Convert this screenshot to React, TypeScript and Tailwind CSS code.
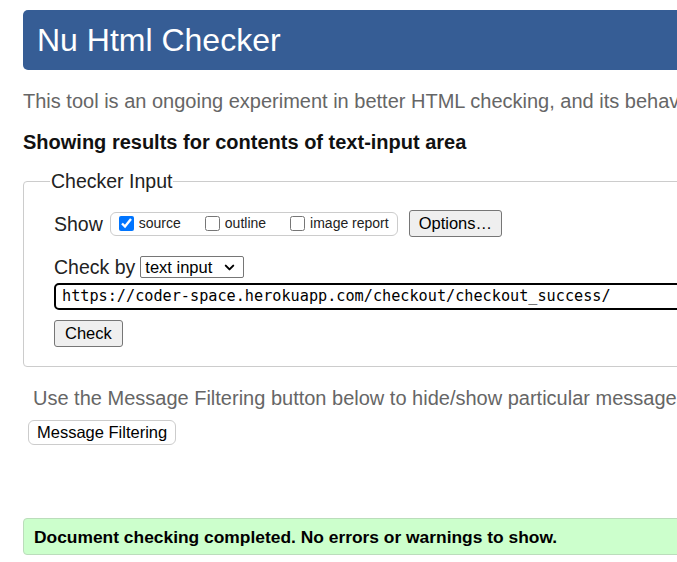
import { ChevronDown } from "lucide-react";

const sans = "font-['Liberation_Sans',Arial,sans-serif]";

export default function App() {
  return (
    <div className={`w-[677px] h-[562px] overflow-hidden bg-white ${sans}`}>
      <div className="w-[1000px] pl-[23px] pt-[10px]">
        {/* title bar */}
        <header className="h-[60px] rounded-[5px] bg-[#365d95] pl-[14px] flex items-center">
          <h1 className="text-[32px] leading-none text-white">Nu Html Checker</h1>
        </header>

        <p className="mt-[20px] text-[20px] leading-[22px] text-[#666] whitespace-nowrap">
          This tool is an ongoing experiment in better HTML checking, and its behavior remains subject to change
        </p>
        <p className="mt-[19px] text-[20px] leading-[22px] font-bold text-[#111]">
          Showing results for contents of text-input area
        </p>

        <fieldset className="mt-[16px] w-[900px] rounded-[4px] border border-[#ccc] pl-[30px] pb-[19px]">
          <legend className="ml-[-4px] px-[1px] text-[19.5px] leading-[24px] text-[#222]">Checker Input</legend>

          <div className="mt-[17px] flex items-center">
            <span className="text-[19.5px] leading-[24px] text-[#222]">Show</span>
            <div className="ml-[7px] flex h-[24px] items-center rounded-[6px] border border-[#ccc] pl-[8px] pr-[8px] text-[14px] text-[#222]">
              <Check label="source" checked />
              <Check label="outline" className="ml-[24px]" />
              <Check label="image report" className="ml-[24px]" />
            </div>
            <button className="ml-[11px] h-[27px] rounded-[3px] border border-[#767676] bg-[#efefef] px-[9px] text-[16.5px] leading-none text-black">
              Options…
            </button>
          </div>

          <div className="mt-[18px] flex items-center">
            <span className="text-[19.5px] leading-[24px] text-[#222]">Check by</span>
            <div className="ml-[5px] flex h-[22px] w-[104px] items-center justify-between rounded-[2px] border border-[#767676] pl-[4px] pr-[6px] text-[16.5px] text-black">
              <span>text input</span>
              <ChevronDown size={15} strokeWidth={3.2} />
            </div>
          </div>

          <div className="mt-[4px] flex h-[27px] items-center rounded-[5px] border-2 border-black pl-[6px] font-['DejaVu_Sans_Mono',monospace] text-[15.2px] text-black">
            https://coder-space.herokuapp.com/checkout/checkout_success/
          </div>

          <button className="mt-[10px] h-[27px] rounded-[3px] border border-[#767676] bg-[#efefef] px-[10px] text-[16.5px] leading-none text-black">
            Check
          </button>
        </fieldset>

        <p className="mt-[20px] pl-[10px] text-[20px] leading-[22px] text-[#666] whitespace-nowrap">
          Use the Message Filtering button below to hide/show particular messages, and to see total counts of errors and warnings.
        </p>
        <button className="mt-[11px] ml-[5px] h-[25px] rounded-[6px] border border-[#ccc] bg-white px-[8px] text-[16.5px] leading-none text-black">
          Message Filtering
        </button>

        <div className="mt-[73px] flex h-[37px] w-[900px] items-center rounded-[4px] border border-[#bbddbb] bg-[#ccffcc] pl-[10px] text-[17.4px] font-bold text-black">
          Document checking completed. No errors or warnings to show.
        </div>
      </div>
    </div>
  );
}

function Check({ label, checked, className = "" }: { label: string; checked?: boolean; className?: string }) {
  return (
    <label className={`flex items-center gap-[5px] ${className}`}>
      <input type="checkbox" defaultChecked={checked} className="m-0 h-[15px] w-[15px] accent-[#0075ff]" />
      <span>{label}</span>
    </label>
  );
}
